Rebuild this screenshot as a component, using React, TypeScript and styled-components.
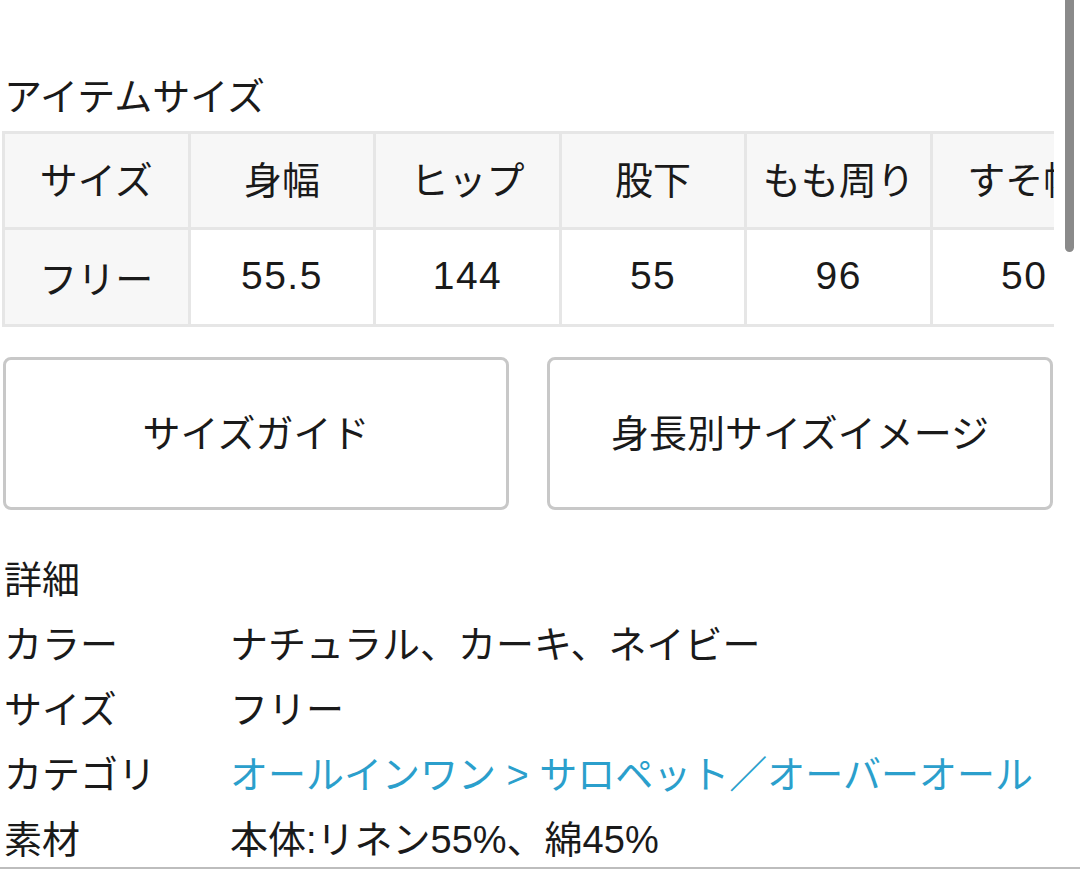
import React from "react";
import styled, { createGlobalStyle } from "styled-components";

const GlobalStyle = createGlobalStyle`
  html, body {
    margin: 0;
    padding: 0;
    background: #ffffff;
    overflow: hidden;
  }
  body {
    font-family: "Liberation Sans", "Noto Sans CJK JP", sans-serif;
    color: #1a1a1a;
  }
`;

const sizeHeaders = ["サイズ", "身幅", "ヒップ", "股下", "もも周り", "すそ幅", "総丈"];
const sizeRows = [["フリー", "55.5", "144", "55", "96", "50", "118"]];

const details = [
  { label: "カラー", value: "ナチュラル、カーキ、ネイビー" },
  { label: "サイズ", value: "フリー" },
  { label: "カテゴリ", value: "オールインワン > サロペット／オーバーオール", link: true },
  { label: "素材", value: "本体:リネン55%、綿45%" },
];

export default function App() {
  return (
    <>
      <GlobalStyle />
      <Page>
        <SectionTitle>アイテムサイズ</SectionTitle>
        <TableScroller>
          <SizeTable>
            <thead>
              <tr>
                {sizeHeaders.map((h) => (
                  <HeadCell key={h}>{h}</HeadCell>
                ))}
              </tr>
            </thead>
            <tbody>
              {sizeRows.map((row) => (
                <tr key={row[0]}>
                  {row.map((v, i) => (
                    <BodyCell key={i} $label={i === 0}>
                      {v}
                    </BodyCell>
                  ))}
                </tr>
              ))}
            </tbody>
          </SizeTable>
        </TableScroller>

        <ButtonRow>
          <GuideButton>サイズガイド</GuideButton>
          <GuideButton>身長別サイズイメージ</GuideButton>
        </ButtonRow>

        <Details>
          <DetailsTitle>詳細</DetailsTitle>
          {details.map((d) => (
            <DetailRow key={d.label}>
              <DetailLabel>{d.label}</DetailLabel>
              <DetailValue $link={d.link}>{d.value}</DetailValue>
            </DetailRow>
          ))}
        </Details>
      </Page>
      <BottomBar />
      <ScrollThumb />
    </>
  );
}

const Page = styled.main`
  padding: 65px 0 0 0;
  width: 1080px;
`;

const SectionTitle = styled.h2`
  margin: 0;
  padding-left: 4px;
  font-size: 38px;
  font-weight: 400;
  line-height: 65px;
  height: 65px;
  white-space: nowrap;
`;

const TableScroller = styled.div`
  margin-left: 2px;
  width: 1052px;
  overflow: hidden;
`;

const SizeTable = styled.table`
  border-collapse: collapse;
  table-layout: fixed;
  width: max-content;
  margin-top: 1px;
`;

const HeadCell = styled.th`
  box-sizing: border-box;
  width: 185.6px;
  min-width: 185.6px;
  height: 96px;
  padding: 0 0 7px 0;
  border: 3px solid #e6e6e6;
  background: #f7f7f7;
  font-size: 38px;
  font-weight: 400;
  text-align: center;
  white-space: nowrap;
  overflow: hidden;
`;

const BodyCell = styled.td<{ $label?: boolean }>`
  box-sizing: border-box;
  width: 185.6px;
  height: 97px;
  padding: 0 0 2px 0;
  border: 3px solid #e6e6e6;
  background: ${(p) => (p.$label ? "#f7f7f7" : "#ffffff")};
  font-size: ${(p) => (p.$label ? "38px" : "39px")};
  letter-spacing: ${(p) => (p.$label ? "0" : "1.5px")};
  text-align: center;
  white-space: nowrap;
`;

const ButtonRow = styled.div`
  display: grid;
  grid-template-columns: 506px 506px;
  gap: 38px;
  margin: 30px 0 0 3px;
`;

const GuideButton = styled.button`
  height: 153px;
  background: #ffffff;
  border: 3px solid #c8c8c8;
  border-radius: 8px;
  font-family: inherit;
  font-size: 38px;
  color: #1a1a1a;
  padding: 0 0 6px 0;
  box-sizing: border-box;
`;

const Details = styled.section`
  margin-top: 38px;
  padding-left: 4px;
`;

const DetailsTitle = styled.h3`
  margin: 0;
  font-size: 38px;
  font-weight: 400;
  line-height: 65px;
`;

const DetailRow = styled.div`
  display: grid;
  grid-template-columns: 226px 1fr;
  font-size: 38px;
  line-height: 65px;
  white-space: nowrap;
`;

const DetailLabel = styled.span``;

const DetailValue = styled.span<{ $link?: boolean }>`
  color: ${(p) => (p.$link ? "#2b9fcc" : "#1a1a1a")};
`;

const BottomBar = styled.div`
  position: fixed;
  left: 0;
  right: 0;
  top: 867px;
  height: 10px;
  background: #ffffff;
  border-top: 2px solid #bdbdbd;
`;

const ScrollThumb = styled.div`
  position: fixed;
  top: -6px;
  left: 1065px;
  width: 9px;
  height: 258px;
  border-radius: 5px;
  background: #8a8a8a;
`;
